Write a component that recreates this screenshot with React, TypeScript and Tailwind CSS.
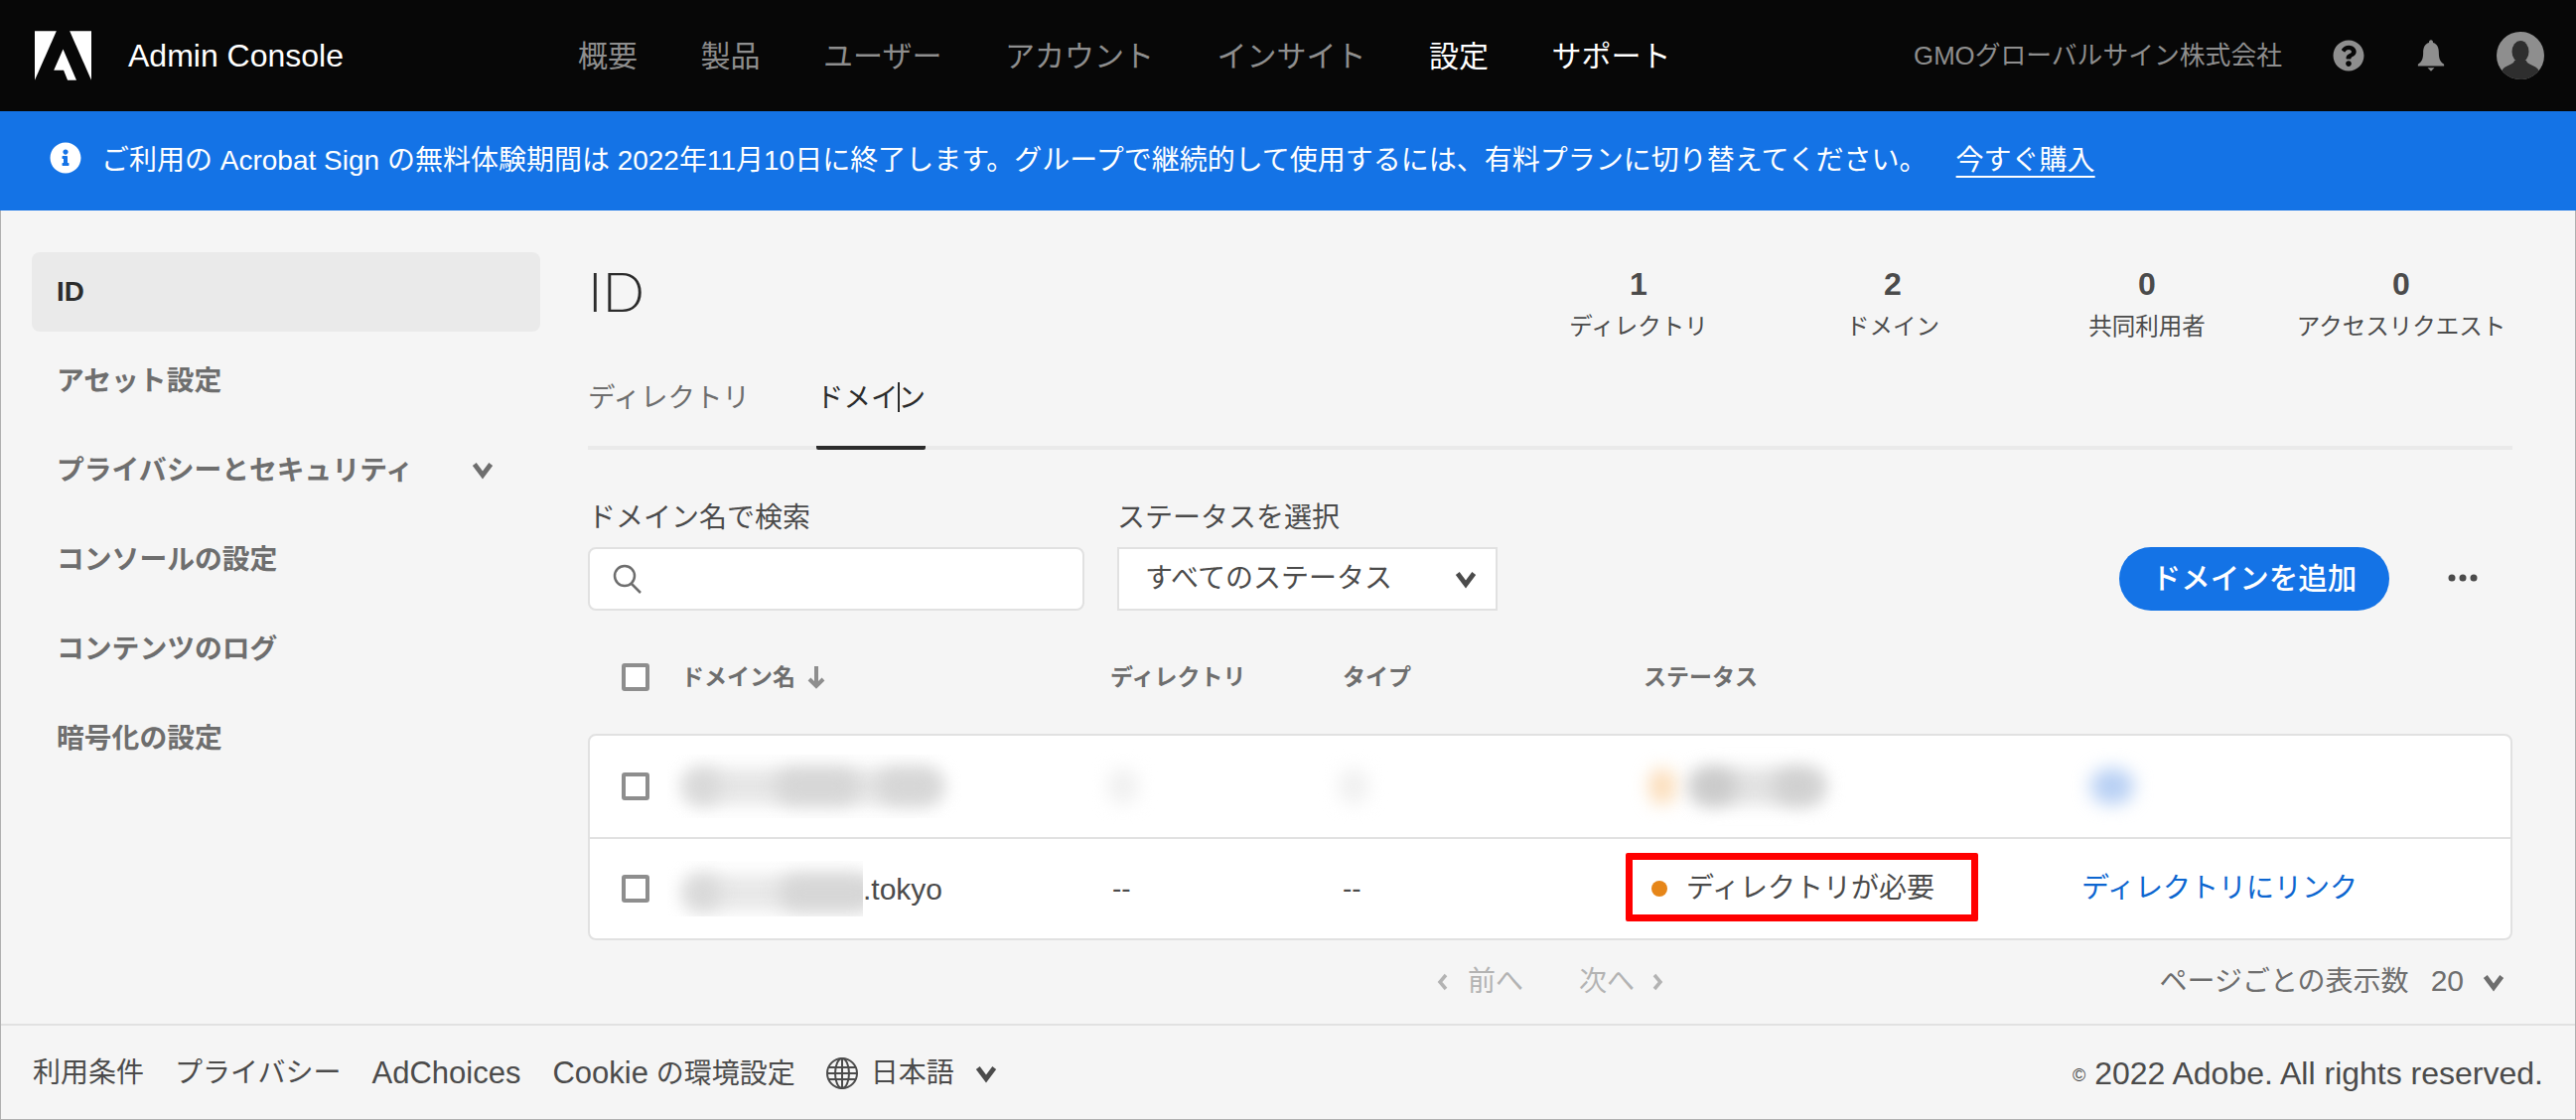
import { FaInfoCircle, FaQuestionCircle } from 'react-icons/fa';

const navItems = ['概要', '製品', 'ユーザー', 'アカウント', 'インサイト'];
const sideItems = ['アセット設定', 'プライバシーとセキュリティ', 'コンソールの設定', 'コンテンツのログ', '暗号化の設定'];
const stats = [
  { value: '1', label: 'ディレクトリ' },
  { value: '2', label: 'ドメイン' },
  { value: '0', label: '共同利用者' },
  { value: '0', label: 'アクセスリクエスト' },
];

const rowGrid = 'grid grid-cols-[62px_432px_232px_305px_440px_1fr] items-center';

function Chevron({ className, dir = 'down' }: { className: string; dir?: 'down' | 'left' | 'right' }) {
  const d = dir === 'down' ? 'M2 4l6 8 6-8' : dir === 'left' ? 'M11 1L5 8l6 7' : 'M5 1l6 7-6 7';
  return (
    <svg viewBox="0 0 16 16" className={className} fill="none" stroke="currentColor" strokeWidth="3.500">
      <path d={d} />
    </svg>
  );
}

function Checkbox() {
  return <div className="w-7 h-7 rounded-[3px] border-[4px] border-[#8e8e8e] bg-white" />;
}

function Blob({ className }: { className: string }) {
  return <div className={`absolute top-[14px] h-[36px] rounded-full blur-[9px] ${className}`} />;
}

function AdobeLogo() {
  return (
    <svg viewBox="0 0 30 26" className="w-[57px] h-[50px]" fill="#fff">
      <path d="M11.5 0H0v26L11.5 0z" />
      <path d="M18.5 0H30v26L18.5 0z" />
      <path d="M15 9.6L22.1 26h-4.7l-2.1-5.2H10.1L15 9.6z" />
    </svg>
  );
}

export default function App() {
  return (
    <div className="h-[1128px] w-[2594px] flex flex-col overflow-hidden bg-[#f5f5f5] font-['Liberation_Sans','Noto_Sans_CJK_JP',sans-serif]">
      {/* Header */}
      <header className="h-[112px] shrink-0 bg-[#070707] flex items-center pl-[35px] pr-[32px]">
        <AdobeLogo />
        <span className="ml-[37px] text-[32px] text-white">Admin Console</span>
        <nav className="ml-[236px] flex items-center gap-[63.5px] text-[30px] text-[#8e8e8e]">
          {navItems.map((item) => (
            <span key={item}>{item}</span>
          ))}
          <span className="text-white">設定</span>
          <span className="text-white">サポート</span>
        </nav>
        <span className="ml-auto text-[25.8px] text-[#8e8e8e]">GMOグローバルサイン株式会社</span>
        <FaQuestionCircle className="ml-[51px] w-8 h-8 text-[#8e8e8e]" />
        <svg viewBox="0 0 32 36" className="ml-[53px] w-[28px] h-[34px] text-[#8e8e8e]" fill="currentColor">
          <path d="M16 0c-1.600 0-2.300 1.200-2.300 3C8.500 4.500 7 9 7 15c0 6-1.500 10-6 13v2h30v-2c-4.500-3-6-7-6-13 0-6-1.500-10.500-6.700-12C18.300 1.200 17.600 0 16 0z" />
          <path d="M12 32h8l-4 4z" />
        </svg>
        <svg viewBox="0 0 48 48" className="ml-[52px] w-12 h-12">
          <clipPath id="avatar">
            <circle cx="24" cy="24" r="24" />
          </clipPath>
          <circle cx="24" cy="24" r="24" fill="#8e8e8e" />
          <g clipPath="url(#avatar)" fill="#2e2e2e">
            <ellipse cx="24" cy="20" rx="8.500" ry="11" />
            <path d="M18 29c0 4-10 5-12 9l-2 10h40l-2-10c-2-4-12-5-12-9z" />
          </g>
        </svg>
      </header>

      {/* Trial banner */}
      <div className="h-[100px] shrink-0 bg-[#1473e6] flex items-center pl-[50px] text-[28px] text-white">
        <FaInfoCircle className="w-8 h-8 -mt-[6px]" />
        <span className="ml-[20px]">ご利用の Acrobat Sign の無料体験期間は 2022年11月10日に終了します。グループで継続的して使用するには、有料プランに切り替えてください。</span>
        <span className="ml-[29px] underline underline-offset-[6px]">今すぐ購入</span>
      </div>

      <div className="flex-1 flex flex-col border-l border-r border-b border-[#b0b0b0]">
        <main className="flex-1 flex pl-[31px]">
          {/* Sidebar */}
          <aside className="w-[512px] pt-[42px] flex flex-col gap-[10px] text-[27.8px] font-bold text-[#6e6e6e]">
            <div className="h-[80px] rounded-[8px] bg-[#eaeaea] flex items-center px-[25px] text-[#2c2c2c]">ID</div>
            {sideItems.map((item, i) => (
              <div key={item} className="h-[80px] flex items-center justify-between pl-[25px] pr-[47px]">
                <span>{item}</span>
                {i === 1 && <Chevron className="w-[22px] h-[22px] -mt-[2px] text-[#6e6e6e]" />}
              </div>
            ))}
          </aside>

          {/* Content */}
          <section className="ml-[48px] w-[1938px] pt-[42px]">
            <div className="h-[80px] flex items-start justify-between">
              <h1 className="h-[78px] flex items-center text-[56px] font-light leading-none text-[#2c2c2c] font-['Lato',sans-serif]">ID</h1>
              <div className="flex mr-[-16px]">
                {stats.map((s) => (
                  <div key={s.label} className="w-[256px] flex flex-col items-center text-[#4b4b4b]">
                    <span className="h-[40px] flex items-center mt-[12px] text-[32px] font-bold">{s.value}</span>
                    <span className="h-[40px] mt-[4px] flex items-center text-[23.5px]">{s.label}</span>
                  </div>
                ))}
              </div>
            </div>

            {/* Tabs */}
            <div className="mt-[38px] h-[81px] flex gap-[67px] border-b-[4px] border-[#eaeaea] text-[27.5px]">
              <div className="h-[58px] flex items-center text-[#6e6e6e]">ディレクトリ</div>
              <div className="relative h-[81px] w-[110px] border-b-[4px] border-[#2c2c2c] rounded-[2px] text-[#2c2c2c]">
                <div className="h-[58px] flex items-center justify-center">ドメイン</div>
                <span className="absolute left-[82px] top-[13px] h-[30px] w-[2px] bg-[#2c2c2c]" />
              </div>
            </div>

            {/* Filters */}
            <div className="mt-[49px] flex items-end text-[28px] text-[#4b4b4b]">
              <div className="w-[500px]">
                <div className="h-[40px] flex items-center">ドメイン名で検索</div>
                <div className="mt-[9px] h-[64px] rounded-[8px] border-2 border-[#e1e1e1] bg-white flex items-center pl-[22px]">
                  <svg viewBox="0 0 32 32" className="w-[32px] h-[32px] text-[#6e6e6e]" fill="none" stroke="currentColor" strokeWidth="2.500">
                    <circle cx="13" cy="13" r="10" />
                    <path d="M20 21l9 9" />
                  </svg>
                </div>
              </div>
              <div className="w-[383px] ml-[33px]">
                <div className="h-[40px] flex items-center">ステータスを選択</div>
                <div className="mt-[9px] h-[64px] border-2 border-[#e1e1e1] bg-white flex items-center justify-between pl-[26px] pr-[19px]">
                  <span>すべてのステータス</span>
                  <Chevron className="w-[22px] h-[22px] text-[#4b4b4b]" />
                </div>
              </div>
              <button className="ml-auto h-[64px] w-[272px] rounded-full bg-[#1473e6] text-white font-medium text-[29.5px]">ドメインを追加</button>
              <svg viewBox="0 0 30 8" className="ml-[59px] mr-[35px] mb-[29px] w-[30px] h-[8px] text-[#4b4b4b]" fill="currentColor">
                <circle cx="4" cy="4" r="3.500" />
                <circle cx="15" cy="4" r="3.500" />
                <circle cx="26" cy="4" r="3.500" />
              </svg>
            </div>

            {/* Table header */}
            <div className={`${rowGrid} mt-[35px] h-[64px] pl-[34px] text-[23px] font-bold text-[#6e6e6e]`}>
              <Checkbox />
              <div className="flex items-center gap-[11px] -ml-[2px]">
                <span>ドメイン名</span>
                <svg viewBox="0 0 20 24" className="w-[20px] h-[24px] text-[#8e8e8e]" fill="none" stroke="currentColor" strokeWidth="4">
                  <path d="M10 1v20M3 14l7 7 7-7" />
                </svg>
              </div>
              <span className="-ml-[2px]">ディレクトリ</span>
              <span>タイプ</span>
              <span className="-ml-[2px]">ステータス</span>
              <span />
            </div>

            {/* Table */}
            <div className="mt-[25px] rounded-[8px] border-2 border-[#e1e1e1] bg-white text-[28px] text-[#4b4b4b]">
              <div className={`${rowGrid} h-[104px] pl-[32px] border-b-2 border-[#e1e1e1]`}>
                <Checkbox />
                <div className="relative h-[64px] w-[296px] -ml-[16px] overflow-hidden">
                  <Blob className="left-[14px] w-[264px] bg-[#e6e6e6]" />
                  <Blob className="left-[18px] w-[36px] bg-[#d8d8d8]" />
                  <Blob className="left-[108px] w-[86px] bg-[#d6d6d6]" />
                  <Blob className="left-[210px] w-[66px] bg-[#d6d6d6]" />
                </div>
                <div className="relative h-[64px] w-[60px] -ml-[18px]">
                  <Blob className="left-[14px] w-[30px] bg-[#f0f0f0]" />
                </div>
                <div className="relative h-[64px] w-[60px] -ml-[18px]">
                  <Blob className="left-[14px] w-[30px] bg-[#f0f0f0]" />
                </div>
                <div className="relative h-[64px] w-[200px]">
                  <Blob className="left-[44px] w-[138px] bg-[#e2e2e2]" />
                  <Blob className="left-[4px] w-[26px] bg-[#fbdcb8]" />
                  <Blob className="left-[46px] w-[46px] bg-[#cacaca]" />
                  <Blob className="left-[128px] w-[50px] bg-[#d0d0d0]" />
                </div>
                <div className="relative h-[64px] w-[70px] -ml-[6px]">
                  <Blob className="left-[14px] w-[44px] bg-[#b8d0f4]" />
                </div>
              </div>
              <div className={`${rowGrid} h-[100px] pl-[32px]`}>
                <Checkbox />
                <div className="flex items-center -ml-[16px] text-[30px]">
                  <div className="relative h-[56px] w-[197px] overflow-hidden">
                    <Blob className="left-[14px] top-[10px] w-[190px] bg-[#e8e8e8]" />
                    <Blob className="left-[18px] top-[10px] w-[36px] bg-[#d8d8d8]" />
                    <Blob className="left-[112px] top-[10px] w-[100px] bg-[#d6d6d6]" />
                  </div>
                  <span>.tokyo</span>
                </div>
                <span>--</span>
                <span>--</span>
                <div className="relative flex items-center pl-[6px] gap-[19px]">
                  <span className="w-4 h-4 rounded-full bg-[#e68619]" />
                  <span>ディレクトリが必要</span>
                  <div className="absolute -left-[20px] -top-[15px] w-[355px] h-[69px] rounded-[2px] border-[7px] border-[#ff0000]" />
                </div>
                <span className="-ml-[1px] text-[#0d66d0]">ディレクトリにリンク</span>
              </div>
            </div>

            {/* Pagination */}
            <div className="mt-[17px] h-[50px] flex items-center pl-[853px] pr-[8px] text-[28px]">
              <div className="flex items-center text-[#b3b3b3]">
                <Chevron dir="left" className="w-[16px] h-[24px]" />
                <span className="ml-[17px]">前へ</span>
                <span className="ml-[56px]">次へ</span>
                <Chevron dir="right" className="ml-[15px] w-[16px] h-[24px]" />
              </div>
              <div className="ml-auto flex items-center text-[#6e6e6e]">
                <span>ページごとの表示数</span>
                <span className="ml-[22px] -mt-[3px] text-[30px]">20</span>
                <Chevron className="ml-[19px] w-[22px] h-[22px]" />
              </div>
            </div>
          </section>
        </main>

        {/* Footer */}
        <footer className="h-[96px] shrink-0 border-t-2 border-[#e1e1e1] flex items-center justify-between px-[32px] pt-[2px] text-[28px] text-[#4b4b4b]">
          <div className="flex items-center">
            <span>利用条件</span>
            <span className="ml-[31px]">プライバシー</span>
            <span className="ml-[31px] text-[31px]">AdChoices</span>
            <span className="ml-[32px]">
              <span className="text-[31px]">Cookie</span> の環境設定
            </span>
            <svg viewBox="0 0 32 32" className="ml-[31px] w-8 h-8" fill="none" stroke="currentColor" strokeWidth="2">
              <circle cx="16" cy="16" r="15" />
              <ellipse cx="16" cy="16" rx="7" ry="15" />
              <path d="M16 1v30M2 10h28M1 16h30M2 22h28" />
            </svg>
            <span className="ml-[13px]">日本語</span>
            <Chevron className="ml-[21px] w-[22px] h-[22px]" />
          </div>
          <span className="text-[32px]">
            <span className="text-[18px] align-[3px]">©</span> 2022 Adobe. All rights reserved.
          </span>
        </footer>
      </div>
    </div>
  );
}
